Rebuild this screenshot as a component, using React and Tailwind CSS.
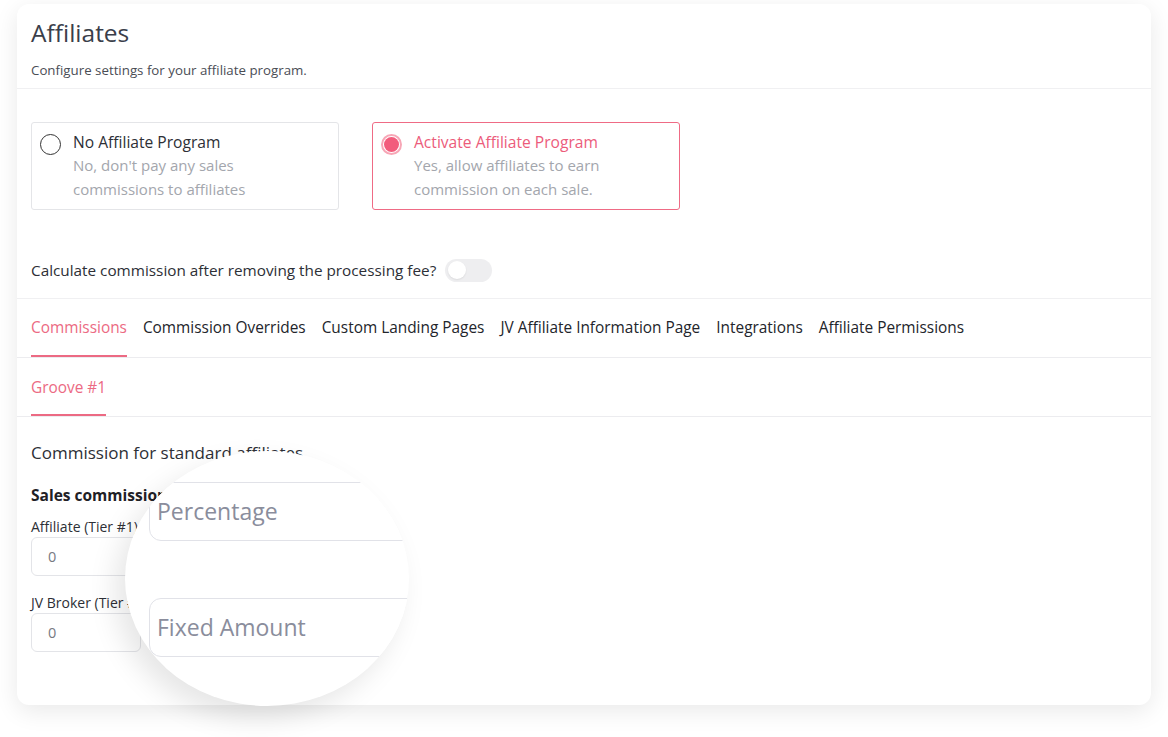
import React from "react";

const font = { fontFamily: "'Open Sans', 'Noto Sans', sans-serif" };

function RadioCard({ active, title, desc }) {
  return (
    <div
      className={
        "flex w-[308px] h-[88px] rounded-[3px] border px-[8px] pt-[8px] " +
        (active ? "border-[#ef6b85]" : "border-[#e4e5e8]")
      }
    >
      <div className="pt-[3px]">
        {active ? (
          <div className="w-[21px] h-[21px] rounded-full border-[2px] border-[#f7a6b6] flex items-center justify-center">
            <div className="w-[15px] h-[15px] rounded-full bg-[#f25c7c]" />
          </div>
        ) : (
          <div className="w-[21px] h-[21px] rounded-full border-[1.5px] border-[#333]" />
        )}
      </div>
      <div className="ml-[12px]">
        <div className={"text-[15.6px] leading-[22px] " + (active ? "text-[#ec5c7b]" : "text-[#2d2f36]")}>
          {title}
        </div>
        <div className="text-[15px] leading-[24px] text-[#a3a6ad] w-[220px]">{desc}</div>
      </div>
    </div>
  );
}

export default function App() {
  const tabs = [
    "Commissions",
    "Commission Overrides",
    "Custom Landing Pages",
    "JV Affiliate Information Page",
    "Integrations",
    "Affiliate Permissions",
  ];
  return (
    <div className="w-[1168px] h-[737px] bg-white pl-[17px] pt-[4px]" style={font}>
      <div className="relative w-[1134px] h-[701px] bg-white rounded-[12px] shadow-[0_6px_24px_rgba(0,0,0,0.09)]">
        {/* header */}
        <div className="px-[14px] pt-[13px] pb-[8px] border-b border-[#f0f0f2]">
          <div className="text-[24.5px] leading-[32px] text-[#3a3e4a]">Affiliates</div>
          <div className="mt-[11px] text-[13.3px] leading-[20px] text-[#4a4d55]">
            Configure settings for your affiliate program.
          </div>
        </div>

        {/* radio cards */}
        <div className="px-[14px] pt-[33px] pb-[16px] border-b border-[#f0f0f2]">
          <div className="flex gap-[33px]">
            <RadioCard
              title="No Affiliate Program"
              desc="No, don't pay any sales commissions to affiliates"
            />
            <RadioCard
              active
              title="Activate Affiliate Program"
              desc="Yes, allow affiliates to earn commission on each sale."
            />
          </div>
          <div className="mt-[48px] flex items-center h-[24px]">
            <span className="text-[15.3px] text-[#2d2f36]">
              Calculate commission after removing the processing fee?
            </span>
            <div className="ml-[9px] w-[47px] h-[23px] rounded-full bg-[#eeeef0] flex items-center pl-[3px]">
              <div className="w-[18px] h-[18px] rounded-full bg-white shadow-[0_1px_2px_rgba(0,0,0,0.08)]" />
            </div>
          </div>
        </div>

        {/* tabs */}
        <div className="px-[14px] flex border-b border-[#ececef]">
          {tabs.map((t, i) => (
            <div
              key={t}
              className={
                "h-[58px] pt-[2px] flex items-center whitespace-nowrap border-b-[2px] mr-[16px] text-[15.4px] " +
                (i === 0 ? "border-[#ec6a83] text-[#ec6a83]" : "border-transparent text-[#23252b]")
              }
            >
              {t}
            </div>
          ))}
        </div>

        {/* sub tab */}
        <div className="px-[14px] flex border-b border-[#ececef]">
          <div className="h-[58px] pt-[3px] w-[75px] flex items-center whitespace-nowrap border-b-[2px] border-[#ec6a83] text-[15.4px] text-[#ec6a83]">
            Groove #1
          </div>
        </div>

        {/* commission form */}
        <div className="px-[14px] pt-[24px]">
          <div className="text-[17px] leading-[24px] text-[#2d2f36]">Commission for standard affiliates</div>
          <div className="mt-[20px] text-[15.5px] leading-[20px] font-bold text-[#1f2126]">Sales commission</div>
          <div className="mt-[12px] text-[14px] leading-[20px] text-[#2d2f36]">Affiliate (Tier #1)</div>
          <div className="w-[110px] h-[39px] rounded-[6px] border border-[#e3e4e8] flex items-center pl-[16px] text-[14.5px] text-[#777a82]">
            0
          </div>
          <div className="mt-[17px] text-[14px] leading-[20px] text-[#2d2f36]">JV Broker (Tier #2)</div>
          <div className="w-[110px] h-[39px] rounded-[6px] border border-[#e3e4e8] flex items-center pl-[16px] text-[14.5px] text-[#777a82]">
            0
          </div>
        </div>

        {/* magnifier lens */}
        <div className="absolute left-[108px] top-[447px] w-[284px] h-[255px] rounded-[50%] overflow-hidden bg-white shadow-[-10px_12px_28px_rgba(0,0,0,0.10)]">
          <div className="absolute left-[24px] top-[31px] w-[320px] h-[59px] rounded-[12px] border-[1.5px] border-[#e1e2e8] bg-white flex items-center pl-[7px] text-[23px] text-[#8a8d9c]">
            Percentage
          </div>
          <div className="absolute left-[24px] top-[147px] w-[320px] h-[59px] rounded-[12px] border-[1.5px] border-[#e1e2e8] bg-white flex items-center pl-[7px] text-[23px] text-[#8a8d9c]">
            Fixed Amount
          </div>
        </div>
      </div>
    </div>
  );
}
